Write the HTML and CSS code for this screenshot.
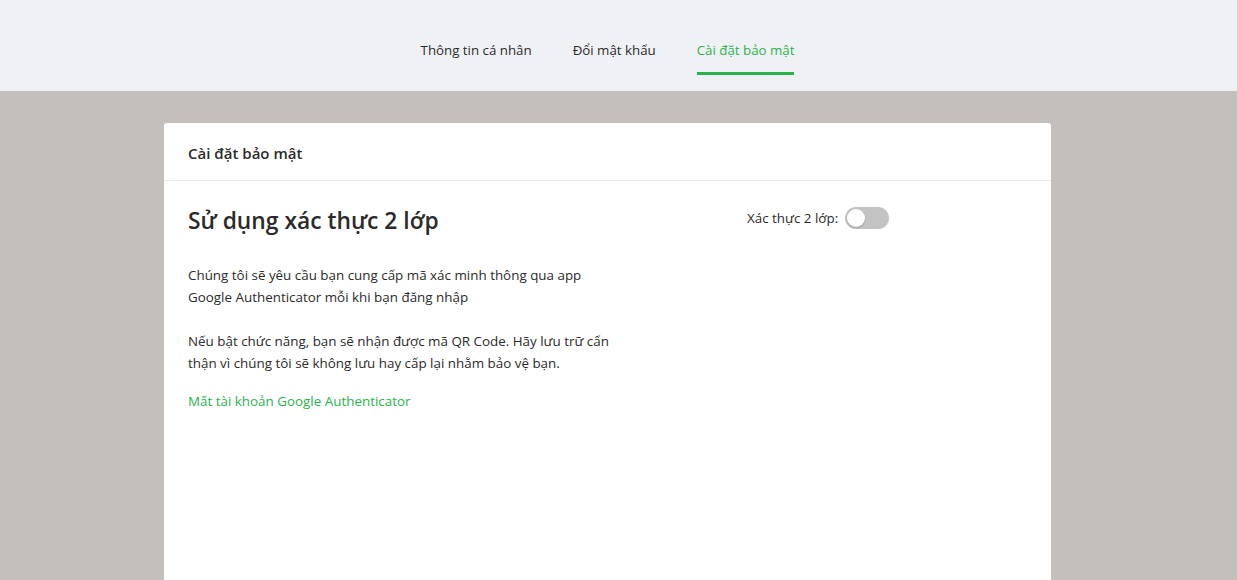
FILE: index.html
```html
<!DOCTYPE html>
<html lang="vi">
<head>
<meta charset="utf-8">
<title>Cài đặt bảo mật</title>
<link rel="stylesheet" href="styles.css">
</head>
<body>
<header class="topbar">
  <nav class="tabs">
    <a class="tab">Thông tin cá nhân</a>
    <a class="tab">Đổi mật khẩu</a>
    <a class="tab active">Cài đặt bảo mật</a>
  </nav>
</header>
<main class="main">
  <section class="card">
    <div class="card-head">Cài đặt bảo mật</div>
    <div class="card-body">
      <div class="info">
        <h1 class="title">Sử dụng xác thực 2 lớp</h1>
        <p class="text">Chúng tôi sẽ yêu cầu bạn cung cấp mã xác minh thông qua app<br>Google Authenticator mỗi khi bạn đăng nhập</p>
        <p class="text">Nếu bật chức năng, bạn sẽ nhận được mã QR Code. Hãy lưu trữ cẩn<br>thận vì chúng tôi sẽ không lưu hay cấp lại nhằm bảo vệ bạn.</p>
        <a class="link">Mất tài khoản Google Authenticator</a>
      </div>
      <label class="switch-row">
        <span>Xác thực 2 lớp:</span>
        <span class="switch"><span class="knob"></span></span>
      </label>
    </div>
  </section>
</main>
</body>
</html>
```

FILE: styles.css
```css
* { box-sizing: border-box; }
html, body { margin: 0; padding: 0; }
body {
  font-family: "Open Sans", "Noto Sans", sans-serif;
  color: #212529;
  background: #c2bfbd;
  height: 580px;
  overflow: hidden;
}
.topbar {
  background: #f0f1f5;
  height: 91px;
  display: flex;
  justify-content: center;
  padding-right: 22px;
}
.tabs {
  display: flex;
  gap: 41px;
}
.tab {
  font-size: 13.3px;
  color: #2b2b2b;
  padding-top: 40px;
  height: 75px;
  border-bottom: 3px solid transparent;
  line-height: 20px;
}
.tab.active {
  color: #28b44c;
  border-bottom-color: #28b44c;
}
.main {
  display: flex;
  justify-content: center;
  padding-top: 32px;
  padding-right: 22px;
}
.card {
  width: 887px;
  height: 480px;
  background: #fff;
  border-radius: 3px;
}
.card-head {
  height: 58px;
  border-bottom: 1px solid #ebebeb;
  padding: 20px 24px 0;
  font-size: 15px;
  font-weight: 600;
  color: #2b2b2b;
}
.card-body {
  display: flex;
  padding: 25px 24px;
}
.info { width: 559px; }
.title {
  margin: 0 0 28px;
  font-size: 22.8px;
  font-weight: 600;
  color: #2b2b2b;
  line-height: 30px;
}
.text {
  margin: 0 0 22px;
  font-size: 13.4px;
  line-height: 22px;
  color: #2b2b2b;
}
.text + .text { margin-bottom: 15px; }
.link {
  font-size: 13.4px;
  line-height: 22px;
  color: #28b44c;
}
.switch-row {
  display: flex;
  align-items: center;
  gap: 7px;
  font-size: 13.4px;
  color: #2b2b2b;
  height: 22px;
  margin-top: 1px;
}
.switch {
  width: 44px;
  height: 22px;
  border-radius: 11px;
  background: #c3c3c3;
  display: flex;
  align-items: center;
  padding: 2px;
}
.knob {
  width: 18px;
  height: 18px;
  border-radius: 50%;
  background: #fff;
  box-shadow: 0 1px 2px rgba(0,0,0,0.2);
}
```
